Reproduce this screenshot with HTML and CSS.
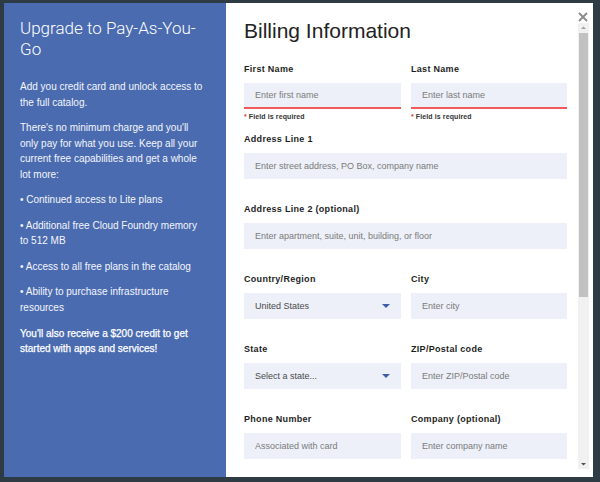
FILE: index.html
```html
<!DOCTYPE html>
<html lang="en">
<head>
<meta charset="utf-8">
<title>Upgrade to Pay-As-You-Go</title>
<link rel="stylesheet" href="styles.css">
</head>
<body>
<div class="modal">
  <aside class="promo">
    <h1 class="promo-title">Upgrade to Pay-As-You-Go</h1>
    <p class="promo-text">Add you credit card and unlock access to the full catalog.</p>
    <p class="promo-text">There's no minimum charge and you'll only pay for what you use. Keep all your current free capabilities and get a whole lot more:</p>
    <p class="promo-text">• Continued access to Lite plans</p>
    <p class="promo-text">• Additional free Cloud Foundry memory to 512 MB</p>
    <p class="promo-text">• Access to all free plans in the catalog</p>
    <p class="promo-text">• Ability to purchase infrastructure resources</p>
    <p class="promo-text promo-strong">You'll also receive a $200 credit to get started with apps and services!</p>
  </aside>
  <section class="billing">
    <div class="form">
      <h2 class="form-title">Billing Information</h2>
      <div class="grid">
        <div class="field">
          <label class="label">First Name</label>
          <input class="input invalid" placeholder="Enter first name">
          <p class="error"><span class="star">*</span> Field is required</p>
        </div>
        <div class="field">
          <label class="label">Last Name</label>
          <input class="input invalid" placeholder="Enter last name">
          <p class="error"><span class="star">*</span> Field is required</p>
        </div>
        <div class="field wide">
          <label class="label">Address Line 1</label>
          <input class="input" placeholder="Enter street address, PO Box, company name">
        </div>
        <div class="field wide">
          <label class="label">Address Line 2 (optional)</label>
          <input class="input" placeholder="Enter apartment, suite, unit, building, or floor">
        </div>
        <div class="field">
          <label class="label">Country/Region</label>
          <div class="input select"><span>United States</span>
            <svg class="caret" width="8" height="4" viewBox="0 0 8 4"><path d="M0 0H8L4 4Z"/></svg>
          </div>
        </div>
        <div class="field">
          <label class="label">City</label>
          <input class="input" placeholder="Enter city">
        </div>
        <div class="field">
          <label class="label">State</label>
          <div class="input select"><span>Select a state...</span>
            <svg class="caret" width="8" height="4" viewBox="0 0 8 4"><path d="M0 0H8L4 4Z"/></svg>
          </div>
        </div>
        <div class="field">
          <label class="label">ZIP/Postal code</label>
          <input class="input" placeholder="Enter ZIP/Postal code">
        </div>
        <div class="field">
          <label class="label">Phone Number</label>
          <input class="input" placeholder="Associated with card">
        </div>
        <div class="field">
          <label class="label">Company (optional)</label>
          <input class="input" placeholder="Enter company name">
        </div>
      </div>
    </div>
    <div class="scrollbar">
      <svg class="sb-arrow" width="11" height="9" viewBox="0 0 11 9"><path d="M3 6H8L5.5 3.5Z"/></svg>
      <div class="thumb"></div>
      <div class="sb-space"></div>
      <svg class="sb-arrow" width="11" height="9" viewBox="0 0 11 9"><path d="M3 3H8L5.5 5.5Z"/></svg>
    </div>
  </section>
  <button class="close" aria-label="Close">
    <svg width="10" height="10" viewBox="0 0 10 10"><path d="M1 1L9 9M9 1L1 9"/></svg>
  </button>
</div>
</body>
</html>
```
FILE: styles.css
```css
html, body {
  margin: 0;
  padding: 0;
}
body {
  background: #2e3b45;
  width: 600px;
  height: 482px;
  overflow: hidden;
  font-family: "Liberation Sans", Arial, sans-serif;
}
.modal {
  position: relative;
  display: flex;
  width: 589px;
  height: 474px;
  margin: 3px 0 0 4px;
  background: #fff;
}
.promo {
  width: 186px;
  flex: none;
  padding: 15px 20px 0 16px;
  background: #4a6bb0;
  color: #fff;
}
.promo-title {
  margin: 0 0 19px;
  font-family: Roboto, "Liberation Sans", sans-serif;
  font-size: 17px;
  font-weight: 300;
  line-height: 21px;
}
.promo-text {
  margin: 0 0 10.1px;
  font-size: 10px;
  line-height: 15.5px;
  color: #f4f6fb;
}
.promo-strong {
  color: #fff;
  -webkit-text-stroke: 0.25px #fff;
}
.billing {
  flex: 1;
  display: flex;
  min-width: 0;
}
.form {
  flex: 1;
  padding: 16px 11px 0 18px;
  overflow: hidden;
}
.form-title {
  margin: 0 0 20px;
  font-size: 21px;
  font-weight: normal;
  line-height: 24px;
  color: #222;
}
.grid {
  display: grid;
  grid-template-columns: 157px 156px;
  column-gap: 10px;
  row-gap: 24px;
}
.field {
  display: flex;
  flex-direction: column;
}
.wide {
  grid-column: 1 / span 2;
}
.label {
  display: block;
  margin-bottom: 8px;
  font-size: 9px;
  font-weight: bold;
  letter-spacing: 0.3px;
  line-height: 12px;
  color: #1e1e1e;
}
.input {
  box-sizing: border-box;
  width: 100%;
  height: 26px;
  margin: 0;
  padding: 0 11px;
  border: 0;
  border-radius: 0;
  background: #edf0f8;
  font-family: "Liberation Sans", Arial, sans-serif;
  font-size: 9px;
  color: #4a4a4a;
  outline: none;
}
.input::placeholder {
  color: #7b7b7b;
}
.invalid {
  border-bottom: 2px solid #f0595b;
}
.select {
  display: flex;
  align-items: center;
  justify-content: space-between;
  padding-right: 11px;
}
.caret {
  fill: #3d5ea8;
}
.error {
  margin: 3px 0 -13px;
  font-size: 7px;
  font-weight: bold;
  letter-spacing: 0.1px;
  line-height: 10px;
  color: #333;
}
.star {
  color: #e0393e;
}
.scrollbar {
  flex: none;
  display: flex;
  flex-direction: column;
  width: 11px;
  margin: 20px 4px 8px 0;
  background: #f1f1f1;
}
.sb-arrow {
  display: block;
  fill: #a3a3a3;
}
.sb-arrow:last-child {
  fill: #505050;
}
.thumb {
  height: 264px;
  margin: 1px 1px 0;
  background: #c1c1c1;
}
.sb-space {
  flex: 1;
}
.close {
  position: absolute;
  top: 7px;
  right: 3px;
  width: 14px;
  height: 14px;
  padding: 0;
  border: 0;
  background: none;
  display: flex;
  align-items: center;
  justify-content: center;
}
.close svg {
  stroke: #8a8a8a;
  stroke-width: 1.8;
  fill: none;
}
```
